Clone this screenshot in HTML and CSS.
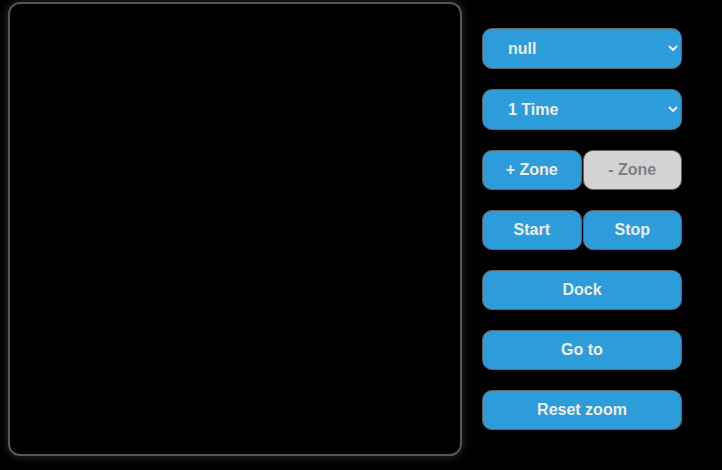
FILE: index.html
```html
<!DOCTYPE html>
<html>
<head>
<meta charset="utf-8">
<link rel="stylesheet" href="styles.css">
</head>
<body>
<div class="app">
  <div class="canvas"></div>
  <div class="controls">
    <select class="ctl sel"><option>null</option></select>
    <select class="ctl sel"><option>1 Time</option></select>
    <div class="pair">
      <button class="ctl btn">+ Zone</button>
      <button class="ctl btn disabled">- Zone</button>
    </div>
    <div class="pair">
      <button class="ctl btn">Start</button>
      <button class="ctl btn">Stop</button>
    </div>
    <button class="ctl btn">Dock</button>
    <button class="ctl btn">Go to</button>
    <button class="ctl btn">Reset zoom</button>
  </div>
</div>
</body>
</html>
```
FILE: styles.css
```css
html, body {
  margin: 0;
  background: #000;
  height: 100%;
  overflow: hidden;
}
.app {
  display: flex;
  align-items: flex-start;
  padding: 2px 0 0 8px;
}
.canvas {
  width: 450px;
  height: 450px;
  border: 2px solid #555;
  border-radius: 12px;
  background: #000;
  box-shadow: 0 0 10px rgba(255, 255, 255, 0.18);
  flex: none;
}
.controls {
  margin-left: 20px;
  padding-top: 26px;
  width: 200px;
  display: flex;
  flex-direction: column;
  gap: 20px;
}
.ctl {
  box-sizing: border-box;
  height: 40px;
  background-color: #2d9cdb;
  color: #eee;
  border: 1px solid #666;
  border-radius: 10px;
  font-family: "Liberation Sans", Arial, sans-serif;
  font-weight: bold;
  font-size: 16px;
  margin: 0;
}
.sel {
  height: 41px;
  width: 200px;
  padding-left: 21px;
}
.btn {
  width: 200px;
  text-align: center;
  padding: 0;
}
.pair {
  display: flex;
  gap: 1px;
}
.pair .btn {
  width: auto;
  flex: 1;
}
.btn.disabled {
  background-color: #d3d3d3;
  color: #808080;
}
```
